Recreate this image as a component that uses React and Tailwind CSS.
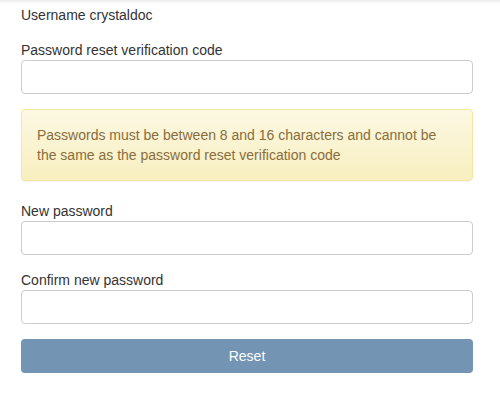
export default function App() {
  return (
    <div
      className="relative h-[403px] w-[500px] bg-white text-[14px] leading-[20px] text-[#333]"
      style={{ fontFamily: '"Liberation Sans", Arial, sans-serif' }}
    >
      <div className="pointer-events-none absolute inset-x-0 top-0 h-[4px] bg-gradient-to-b from-[#ececec] to-white" />
      <div className="ml-[21px] w-[452px] pt-[5px]">
        <div className="mb-[15px]">Username crystaldoc</div>

        <label className="block">Password reset verification code</label>
        <input
          type="text"
          className="block h-[34px] w-full rounded-[4px] border border-[#ccc] px-3 outline-none"
        />

        <div className="mb-[20px] mt-[15px] rounded-[4px] border border-[#f5e79e] bg-gradient-to-b from-[#fcf8e3] to-[#f8efc0] p-[15px] text-[#8a6d3b] shadow-[0_1px_1px_rgba(0,0,0,0.05)]">
          Passwords must be between 8 and 16 characters and cannot be the same as the password reset verification code
        </div>

        <div className="mb-[15px]">
          <label className="block">New password</label>
          <input
            type="password"
            className="block h-[34px] w-full rounded-[4px] border border-[#ccc] px-3 outline-none"
          />
        </div>

        <div className="mb-[15px]">
          <label className="block">Confirm new password</label>
          <input
            type="password"
            className="block h-[34px] w-full rounded-[4px] border border-[#ccc] px-3 outline-none"
          />
        </div>

        <button
          type="button"
          className="block h-[34px] w-full rounded-[4px] bg-[#7394b3] text-center text-[14px] text-white"
        >
          Reset
        </button>
      </div>
    </div>
  );
}
